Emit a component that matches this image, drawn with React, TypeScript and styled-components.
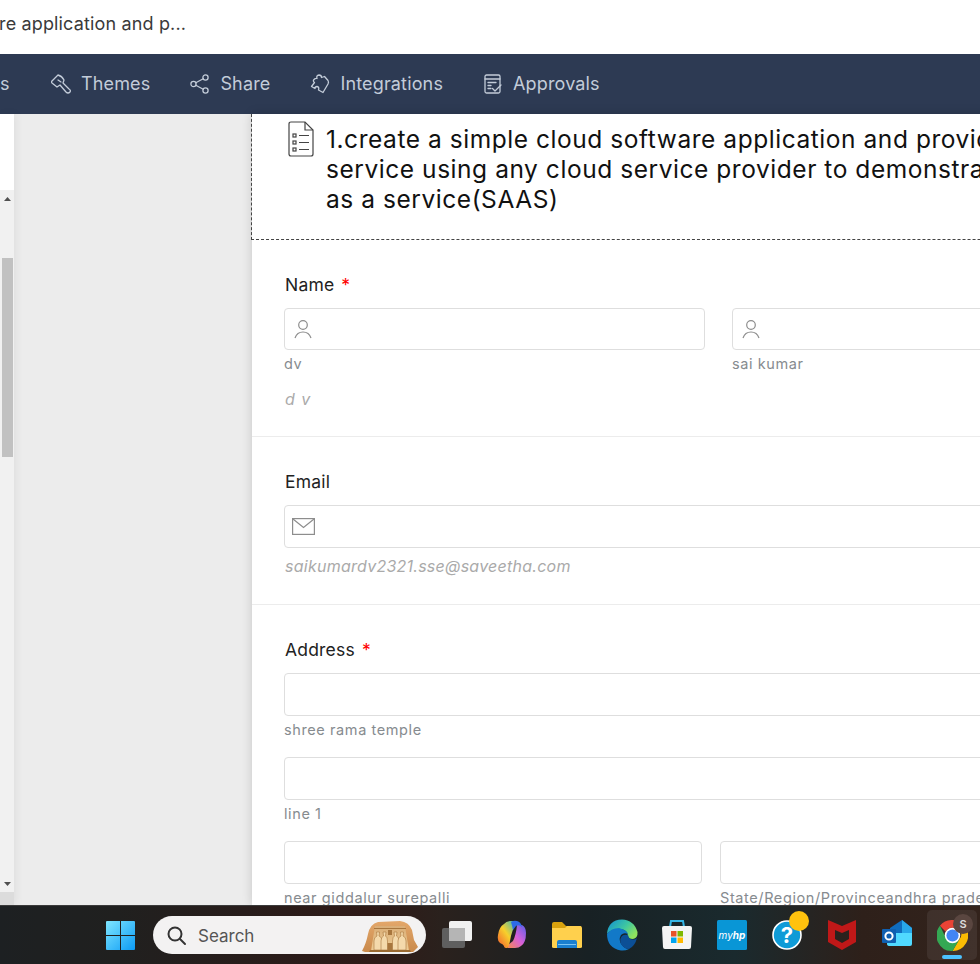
import React from 'react'
import styled, { createGlobalStyle } from 'styled-components'

const GlobalStyle = createGlobalStyle`
    html, body {
        margin: 0;
        padding: 0;
        background: #fff;
        font-family: Inter, "Liberation Sans", sans-serif;
    }
    * { box-sizing: border-box; }
`

const Page = styled.div`
    width: 980px;
    height: 964px;
    display: flex;
    flex-direction: column;
    overflow: hidden;
`

const TitleBar = styled.div`
    height: 54px;
    flex: none;
    display: flex;
    align-items: center;
    background: #fff;
    color: #3a3a3a;
    font-size: 18px;
    letter-spacing: 0.15px;
    padding-bottom: 8px;
    margin-left: -1px;
`

const NavBar = styled.div`
    height: 60px;
    flex: none;
    display: flex;
    align-items: center;
    background: #2d3a53;
    color: #c3ccd9;
    font-size: 18px;
    letter-spacing: 0.15px;
    padding-bottom: 1px;
`

const NavClipped = styled.span`
    width: 51px;
    flex: none;
`

const NavItem = styled.div<{ $gap: number }>`
    display: flex;
    align-items: center;
    gap: 10px;
    margin-right: ${p => p.$gap}px;
`

const Body = styled.div`
    flex: 1;
    min-height: 0;
    display: flex;
    background: #ececec;
`

const SidePanel = styled.div`
    width: 14px;
    flex: none;
    display: flex;
    flex-direction: column;
    box-shadow: 2px 0 8px rgba(0, 0, 0, 0.06);
`

const SideWhite = styled.div`
    height: 76px;
    flex: none;
    background: #fff;
`

const Track = styled.div`
    flex: 1;
    display: flex;
    flex-direction: column;
    align-items: center;
    background: #f1f1f1;
`

const ArrowBox = styled.div`
    height: 17px;
    flex: none;
    width: 100%;
    display: flex;
    align-items: center;
    justify-content: center;
`

const ThumbSpace = styled.div`
    flex: 1;
    width: 100%;
    padding: 51px 1px 0 2px;
`

const Thumb = styled.div`
    height: 199px;
    background: #c1c1c1;
`

const SideEnd = styled.div`
    height: 13px;
    flex: none;
    background: #dcdcdc;
`

const Gutter = styled.div`
    width: 238px;
    flex: none;
`

const Form = styled.div`
    width: 934px;
    flex: none;
    background: #fff;
    box-shadow: 0 0 10px rgba(0, 0, 0, 0.16);
`

const Header = styled.div`
    height: 126px;
    display: flex;
    align-items: flex-start;
    gap: 12px;
    padding: 7px 0 0 36px;
    margin-left: -1px;
    border-left: 1px dashed #444;
    border-bottom: 1px dashed #444;
`

const HeaderText = styled.div`
    font-size: 24.5px;
    letter-spacing: 0.55px;
    line-height: 30px;
    color: #111;
    white-space: nowrap;
    padding-top: 3px;
`

const Section = styled.div<{ $last?: boolean }>`
    padding: 33px 32px 0;
    border-bottom: ${p => (p.$last ? 'none' : '1px solid #ececec')};
`

const Label = styled.div`
    font-size: 17.5px;
    letter-spacing: 0.2px;
    line-height: 24px;
    color: #222;
    margin-bottom: 11px;
    padding-left: 1px;
`

const Required = styled.span`
    color: #f00;
    margin-left: 7px;
`

const Columns = styled.div<{ $gap: number, $col: number }>`
    display: grid;
    grid-template-columns: ${p => p.$col}px ${p => p.$col}px;
    column-gap: ${p => p.$gap}px;
`

const Input = styled.div<{ $height?: number }>`
    height: ${p => p.$height ?? 43}px;
    display: flex;
    align-items: center;
    padding-left: 7px;
    background: #fff;
    border: 1px solid #dedede;
    border-radius: 4px;
`

const Hint = styled.div<{ $mb?: number }>`
    font-size: 14.5px;
    letter-spacing: 0.6px;
    line-height: 18px;
    color: #868b8f;
    margin-top: 5px;
    margin-bottom: ${p => p.$mb ?? 0}px;
    white-space: nowrap;
`

const Value = styled.div<{ $spacing?: number, $pb: number, $mt: number }>`
    font-size: 16px;
    line-height: 20px;
    font-style: italic;
    color: #aaa;
    margin-top: ${p => p.$mt}px;
    padding-left: 1px;
    padding-bottom: ${p => p.$pb}px;
    letter-spacing: ${p => p.$spacing ?? 0}px;
`

const Taskbar = styled.div`
    height: 59px;
    flex: none;
    display: flex;
    align-items: center;
    padding-left: 106px;
    border-top: 1px solid #3b3b3b;
    background: linear-gradient(90deg, #1d2022 0%, #20201f 12%, #2f1a17 38%, #2a211d 45%, #182124 60%, #1a2a2e 75%, #2e201a 88%, #33231c 100%);
`

const SearchBox = styled.div`
    width: 273px;
    height: 38px;
    flex: none;
    margin-left: 18px;
    margin-right: 15px;
    display: flex;
    align-items: center;
    border-radius: 19px;
    background: #f3f2f2;
    color: #555;
    font-size: 17px;
    padding: 1px 8px 0 14px;
    gap: 11px;
    overflow: hidden;
`

const SearchSpacer = styled.div`
    flex: 1;
`

const TaskIcon = styled.div<{ $ml?: number }>`
    width: 32px;
    height: 32px;
    flex: none;
    margin-left: ${p => p.$ml ?? 0}px;
    position: relative;
    display: flex;
    align-items: center;
    justify-content: center;
`

const ChromeCell = styled.div`
    width: 50px;
    height: 50px;
    flex: none;
    margin-left: 14px;
    border-radius: 5px;
    background: rgba(255, 255, 255, 0.07);
    display: flex;
    align-items: center;
    justify-content: center;
    position: relative;
`

const Badge = styled.div`
    position: absolute;
    top: 4px;
    right: 4px;
    width: 20px;
    height: 20px;
    border-radius: 50%;
    background: #5a4640;
    color: #ddd;
    font-size: 11px;
    font-weight: 600;
    display: flex;
    align-items: center;
    justify-content: center;
`

const RunningBar = styled.div`
    position: absolute;
    bottom: 1px;
    left: 15px;
    width: 20px;
    height: 4px;
    border-radius: 2px;
    background: #4cc2ff;
`

const Dot = styled.div`
    position: absolute;
    top: -8px;
    right: -6px;
    width: 20px;
    height: 20px;
    border-radius: 50%;
    background: #ffc20e;
`

const NavSvg = ({ children }: { children: React.ReactNode }) => (
    <svg width="20" height="20" viewBox="0 0 20 20" fill="none" stroke="#c3ccd9" strokeWidth="1.3" strokeLinejoin="round" strokeLinecap="round">
        {children}
    </svg>
)

const ThemesIcon = () => (
    <NavSvg>
        <path d="M7 1 L1 7 Q0 8 1 9 L6 13 L9 11 L15 18 Q17 20 19 18 Q20 16 18 15 L12 9 L13 6 Q11 2 7 1 Z" />
        <path d="M7 6 L10 8" />
    </NavSvg>
)

const ShareIcon = () => (
    <NavSvg>
        <circle cx="3.5" cy="10" r="2.6" />
        <circle cx="15.5" cy="3.5" r="2.6" />
        <circle cx="15.5" cy="16.5" r="2.6" />
        <path d="M5.8 8.8 L13.2 4.8 M5.8 11.2 L13.2 15.2" />
    </NavSvg>
)

const IntegrationsIcon = () => (
    <NavSvg>
        <path d="M7 4.5 Q6 1.5 9 1 Q11.5 1 11.5 3.5 L14.5 2.5 L18 6.5 Q19 8 18 10 L13 18.5 L8.5 16 Q9.5 13 7 12.5 Q5 12.5 5 14.5 L1.5 12.5 L4.5 8.5 Q2.5 7 4 5.5 Q5.5 4 7 4.5 Z" />
    </NavSvg>
)

const ApprovalsIcon = () => (
    <NavSvg>
        <rect x="2" y="1" width="15" height="18" rx="1.5" />
        <path d="M2 5 H17 M5 8.5 H13 M5 11.5 H8 M5 14.5 H8" />
        <path d="M9.5 14.5 L12 17 L18 11" />
    </NavSvg>
)

const DocIcon = () => (
    <svg width="26" height="36" viewBox="0 0 26 36" fill="none" stroke="#444" strokeWidth="1.2" style={{ flex: 'none' }}>
        <path d="M3 1 H17 L25 9 V33 Q25 35 23 35 H3 Q1 35 1 33 V3 Q1 1 3 1 Z" />
        <path d="M17 1 V9 H25" />
        <rect x="5" y="13" width="3" height="3" />
        <rect x="5" y="20" width="3" height="3" />
        <rect x="5" y="27" width="3" height="3" />
        <path d="M11 14.5 H21 M11 21.5 H21 M11 28.5 H21" />
    </svg>
)

const PersonIcon = () => (
    <svg width="22" height="22" viewBox="0 0 22 22" fill="none" stroke="#8d8d8d" strokeWidth="1.2">
        <circle cx="11" cy="7" r="4.3" />
        <path d="M3 20 Q5 14 11 14 Q17 14 19 20" />
    </svg>
)

const MailIcon = () => (
    <svg width="23" height="17" viewBox="0 0 23 17" fill="none" stroke="#8d8d8d" strokeWidth="1.2">
        <rect x="0.6" y="0.6" width="21.8" height="15.8" />
        <path d="M1 1 L11.5 9.5 L22 1" />
    </svg>
)

const WindowsIcon = () => (
    <svg width="29" height="29" viewBox="0 0 29 29" style={{ flex: 'none' }}>
        <defs>
            <linearGradient id="win" x1="0" y1="0" x2="1" y2="1">
                <stop offset="0" stopColor="#7fe6ff" />
                <stop offset="1" stopColor="#0c9bf5" />
            </linearGradient>
        </defs>
        <path fill="url(#win)" d="M0 1 Q0 0 1 0 H14 V14 H0 Z M15 0 H28 Q29 0 29 1 V14 H15 Z M0 15 H14 V29 H1 Q0 29 0 28 Z M15 15 H29 V28 Q29 29 28 29 H15 Z" />
    </svg>
)

const SearchIcon = () => (
    <svg width="20" height="20" viewBox="0 0 20 20" fill="none" stroke="#333" strokeWidth="2" strokeLinecap="round">
        <circle cx="8" cy="8" r="6.5" />
        <path d="M13 13 L18 18" />
    </svg>
)

const TempleArt = () => (
    <svg width="56" height="32" viewBox="0 0 56 32" style={{ flex: 'none', marginTop: 1 }}>
        <defs>
            <linearGradient id="rock" x1="0" y1="0" x2="0" y2="1">
                <stop offset="0" stopColor="#e3a76a" />
                <stop offset="1" stopColor="#c98a4c" />
            </linearGradient>
            <linearGradient id="facade" x1="0" y1="0" x2="0" y2="1">
                <stop offset="0" stopColor="#d9ad76" />
                <stop offset="1" stopColor="#efcd96" />
            </linearGradient>
        </defs>
        <path fill="url(#rock)" d="M0 31 Q4 24 6 14 Q8 4 16 2 L38 1 Q47 2 50 10 L52 20 L56 27 L51 32 H3 Z" />
        <path fill="url(#facade)" d="M9 31 L13 6 H43 L47 31 Z" />
        <path fill="#a8763d" d="M12 8 H44 V9 H12 Z M26 10 H30 V15 H26 Z M25 23 H31 V31 H25 Z" />
        <g fill="#f4d9ab" stroke="#a8763d" strokeWidth="0.6">
            <path d="M12 30 V21 Q12 17 15 16 L14.5 12 H17.5 L17 16 Q20 17 20 21 V30 Z" />
            <path d="M19 30 V21 Q19 17 21.5 16 L21 12 H24 L23.5 16 Q25.5 17 25.5 21 V30 Z" />
            <path d="M30.5 30 V21 Q30.5 17 32.5 16 L32 12 H35 L34.5 16 Q37 17 37 21 V30 Z" />
            <path d="M36 30 V21 Q36 17 39 16 L38.5 12 H41.5 L41 16 Q44 17 44 21 V30 Z" />
        </g>
        <path fill="#9a6a32" d="M8 30 H48 L49 32 H7 Z" />
    </svg>
)

const TaskViewIcon = () => (
    <svg width="32" height="32" viewBox="0 0 32 32">
        <rect x="1" y="9" width="23" height="20" rx="2" fill="#5f5f5f" />
        <rect x="8" y="2" width="23" height="20" rx="2" fill="#f1f1f1" />
        <rect x="8" y="9" width="16" height="13" fill="#b5b5b5" />
    </svg>
)

const CopilotIcon = () => (
    <svg width="32" height="32" viewBox="0 0 32 32">
        <defs>
            <linearGradient id="copA" x1="0" y1="1" x2="1" y2="0">
                <stop offset="0" stopColor="#f2552d" />
                <stop offset="0.5" stopColor="#f7d02c" />
                <stop offset="1" stopColor="#25b6c9" />
            </linearGradient>
            <linearGradient id="copB" x1="0" y1="1" x2="1" y2="0">
                <stop offset="0" stopColor="#f58b4a" />
                <stop offset="0.5" stopColor="#d860d8" />
                <stop offset="1" stopColor="#5a5fe8" />
            </linearGradient>
        </defs>
        <path fill="url(#copB)" d="M21 6 H26 Q30 8 30 14 Q30 24 25 27 Q23 29 19 29 H12 Q10 28 12 26 L17 22 Q20 16 21 6 Z" />
        <path fill="url(#copA)" d="M8 5 Q10 2 15 2 H20 Q22 3 20 6 Q16 10 14 22 Q13 28 11 29 Q8 29 8 27 Q7 25 4 24 Q1 22 2 16 Q3 8 8 5 Z" />
        <path fill="#2d6be8" d="M15 3 Q18 1 21 2 Q25 3 26 8 Q23 5 20 7 L17 11 Q16 6 15 3 Z" />
    </svg>
)

const FolderIcon = () => (
    <svg width="32" height="32" viewBox="0 0 32 32">
        <path fill="#d9a20e" d="M1 5 Q1 3 3 3 H11 L15 7 H30 V13 H1 Z" />
        <path fill="#ffd04d" d="M1 9 H14 L16 7 H29 Q31 7 31 9 V28 Q31 29 29 29 H3 Q1 29 1 28 Z" />
        <path fill="#1a7fcf" d="M6 29 V23 Q6 21 8 21 H24 Q26 21 26 23 V29 Z" />
        <path fill="#7cc4f2" d="M7 25 H25 V26 H7 Z" />
    </svg>
)

const EdgeIcon = () => (
    <svg width="32" height="32" viewBox="0 0 32 32">
        <defs>
            <linearGradient id="edgeA" x1="0" y1="0" x2="1" y2="0.6">
                <stop offset="0" stopColor="#0f8ed6" />
                <stop offset="0.6" stopColor="#3fc7a0" />
                <stop offset="1" stopColor="#8ee25e" />
            </linearGradient>
        </defs>
        <path fill="url(#edgeA)" d="M1 15 Q2 1 16 0.5 Q28 1 31.5 13 Q32 19 27 20 Q22 20 22 17 Q22 11 14 10 Q5 10 1 15 Z" />
        <path fill="#1279c8" d="M1 15 Q5 9 13 9 Q21 11 22 15 Q18 13 15 16 Q12 21 16 26 Q19 30 23 30 Q19 32 15 31.5 Q1 29 1 15 Z" />
        <path fill="#0c4f96" d="M16 17 Q18 15 22 16 Q23 21 28 20.5 Q30 20 31 19 Q29 27 23 30 Q18 30 15 25 Q13 20 16 17 Z" />
    </svg>
)

const StoreIcon = () => (
    <svg width="32" height="32" viewBox="0 0 32 32">
        <path fill="none" stroke="#35b6e6" strokeWidth="2" d="M9 8 L10 2 H22 L23 8" />
        <path fill="#f4f4f4" d="M3 7 H29 Q31 7 31 9 L30 28 Q30 30 28 30 H4 Q2 30 2 28 L1 9 Q1 7 3 7 Z" />
        <rect x="10" y="12" width="5.5" height="5.5" fill="#e8532b" />
        <rect x="16.5" y="12" width="5.5" height="5.5" fill="#7fb800" />
        <rect x="10" y="18.5" width="5.5" height="5.5" fill="#00a4ef" />
        <rect x="16.5" y="18.5" width="5.5" height="5.5" fill="#ffb900" />
    </svg>
)

const MyHpIcon = () => (
    <svg width="30" height="30" viewBox="0 0 30 30">
        <rect width="30" height="30" rx="1.5" fill="#0996d6" />
        <text x="15" y="19" textAnchor="middle" fontSize="10" fontStyle="italic" fill="#fff" fontFamily="Inter, sans-serif">my<tspan fontWeight="700">hp</tspan></text>
    </svg>
)

const HelpIcon = () => (
    <svg width="30" height="30" viewBox="0 0 30 30">
        <circle cx="15" cy="15" r="14" fill="#0f9bd7" stroke="#fff" strokeWidth="1.6" />
        <text x="15" y="23" textAnchor="middle" fontSize="22" fontWeight="700" fill="#fff" fontFamily="Inter, sans-serif">?</text>
    </svg>
)

const McAfeeIcon = () => (
    <svg width="28" height="30" viewBox="0 0 28 30">
        <path fill="#c01818" d="M0 0 L14 6 L28 0 V22 L14 30 L0 22 Z M7 10 V19 L14 23 L21 19 V10 L14 13 Z" fillRule="evenodd" />
    </svg>
)

const OutlookIcon = () => (
    <svg width="32" height="32" viewBox="0 0 32 32">
        <path fill="#0f6cbd" d="M9 9 L21 1 L31 9 V18 H9 Z" />
        <path fill="#28a8ea" d="M21 1 L31 9 V18 H21 Z" />
        <path fill="#50d9ff" d="M6 14 H31 V25 Q31 27 29 27 H9 Q6 27 6 25 Z" />
        <rect x="1" y="10" width="14" height="14" rx="1" fill="#0f5fb0" />
        <circle cx="8" cy="17" r="3.6" fill="none" stroke="#fff" strokeWidth="2" />
    </svg>
)

const ChromeIcon = () => (
    <svg width="31" height="31" viewBox="0 0 32 32">
        <path fill="#ea4335" d="M16 0 A16 16 0 0 1 30 8 H16 A8 8 0 0 0 9 12 L3 6 A16 16 0 0 1 16 0 Z" />
        <path fill="#fbbc04" d="M30 8 A16 16 0 0 1 16 32 L23 20 A8 8 0 0 0 22 8 Z" />
        <path fill="#34a853" d="M3 6 L10 20 A8 8 0 0 0 23 20 L16 32 A16 16 0 0 1 3 6 Z" />
        <circle cx="16" cy="16" r="8" fill="#fff" />
        <circle cx="16" cy="16" r="6.3" fill="#4285f4" />
    </svg>
)

const Triangle = ({ up }: { up?: boolean }) => (
    <svg width="7" height="4" viewBox="0 0 7 4">
        <path fill="#505050" d={up ? 'M3.5 0 L7 4 H0 Z' : 'M0 0 H7 L3.5 4 Z'} />
    </svg>
)

const App = () => {
    return <>
        <GlobalStyle />
        <Page>
            <TitleBar>re application and p...</TitleBar>
            <NavBar>
                <NavClipped>s</NavClipped>
                <NavItem $gap={40}><ThemesIcon />Themes</NavItem>
                <NavItem $gap={40}><ShareIcon />Share</NavItem>
                <NavItem $gap={40}><IntegrationsIcon />Integrations</NavItem>
                <NavItem $gap={0}><ApprovalsIcon />Approvals</NavItem>
            </NavBar>
            <Body>
                <SidePanel>
                    <SideWhite />
                    <Track>
                        <ArrowBox><Triangle up /></ArrowBox>
                        <ThumbSpace><Thumb /></ThumbSpace>
                        <ArrowBox><Triangle /></ArrowBox>
                    </Track>
                    <SideEnd />
                </SidePanel>
                <Gutter />
                <Form>
                    <Header>
                        <DocIcon />
                        <HeaderText>
                            1.create a simple cloud software application and provide the<br />
                            service using any cloud service provider to demonstrate software<br />
                            as a service(SAAS)
                        </HeaderText>
                    </Header>
                    <Section>
                        <Label>Name<Required>*</Required></Label>
                        <Columns $col={421} $gap={27}>
                            <div>
                                <Input $height={42}><PersonIcon /></Input>
                                <Hint>dv</Hint>
                            </div>
                            <div>
                                <Input $height={42}><PersonIcon /></Input>
                                <Hint>sai kumar</Hint>
                            </div>
                        </Columns>
                        <Value $spacing={1} $mt={16} $pb={27}>d v</Value>
                    </Section>
                    <Section>
                        <Label>Email</Label>
                        <Input><MailIcon /></Input>
                        <Value $spacing={0.25} $mt={8} $pb={28}>saikumardv2321.sse@saveetha.com</Value>
                    </Section>
                    <Section $last>
                        <Label>Address<Required>*</Required></Label>
                        <Input />
                        <Hint $mb={18}>shree rama temple</Hint>
                        <Input />
                        <Hint $mb={18}>line 1</Hint>
                        <Columns $col={418} $gap={18}>
                            <div>
                                <Input />
                                <Hint>near giddalur surepalli</Hint>
                            </div>
                            <div>
                                <Input />
                                <Hint>State/Region/Provinceandhra pradesh</Hint>
                            </div>
                        </Columns>
                    </Section>
                </Form>
            </Body>
            <Taskbar>
                <WindowsIcon />
                <SearchBox>
                    <SearchIcon />
                    Search
                    <SearchSpacer />
                    <TempleArt />
                </SearchBox>
                <TaskIcon><TaskViewIcon /></TaskIcon>
                <TaskIcon $ml={23}><CopilotIcon /></TaskIcon>
                <TaskIcon $ml={23}><FolderIcon /></TaskIcon>
                <TaskIcon $ml={23}><EdgeIcon /></TaskIcon>
                <TaskIcon $ml={23}><StoreIcon /></TaskIcon>
                <TaskIcon $ml={23}><MyHpIcon /></TaskIcon>
                <TaskIcon $ml={23}><HelpIcon /><Dot /></TaskIcon>
                <TaskIcon $ml={23}><McAfeeIcon /></TaskIcon>
                <TaskIcon $ml={23}><OutlookIcon /></TaskIcon>
                <ChromeCell>
                    <ChromeIcon />
                    <Badge>S</Badge>
                    <RunningBar />
                </ChromeCell>
            </Taskbar>
        </Page>
    </>
}

export default App
